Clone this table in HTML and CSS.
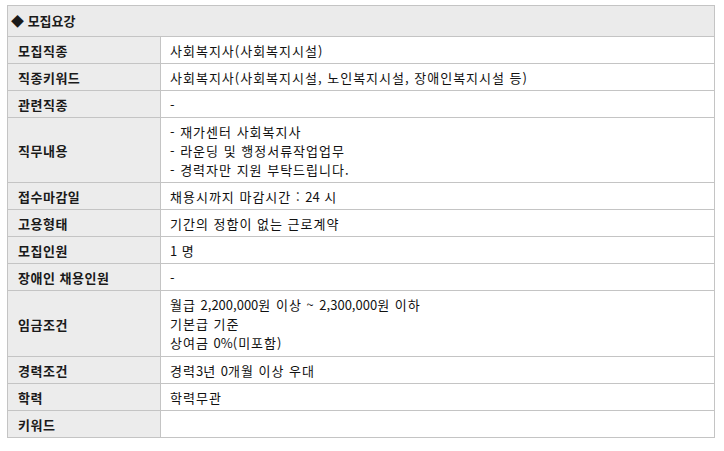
FILE: index.html
```html
<!DOCTYPE html>
<html lang="ko">
<head>
    <meta charset="UTF-8">
    <meta name="viewport" content="width=device-width, initial-scale=1.0">
    <title>모집요강</title>
    <link rel="stylesheet" href="styles.css">
</head>
<body>
    <table class="recruit-table">
        <tr>
            <th class="table-title" colspan="2">◆ 모집요강</th>
        </tr>
        <tr>
            <th>모집직종</th>
            <td>사회복지사(사회복지시설)</td>
        </tr>
        <tr>
            <th>직종키워드</th>
            <td>사회복지사(사회복지시설, 노인복지시설, 장애인복지시설 등)</td>
        </tr>
        <tr>
            <th>관련직종</th>
            <td>-</td>
        </tr>
        <tr>
            <th>직무내용</th>
            <td>- 재가센터 사회복지사<br>- 라운딩 및 행정서류작업업무<br>- 경력자만 지원 부탁드립니다.</td>
        </tr>
        <tr>
            <th>접수마감일</th>
            <td>채용시까지 마감시간 : <span class="num">24</span> 시</td>
        </tr>
        <tr>
            <th>고용형태</th>
            <td>기간의 정함이 없는 근로계약</td>
        </tr>
        <tr>
            <th>모집인원</th>
            <td><span class="num">1</span> 명</td>
        </tr>
        <tr>
            <th>장애인 채용인원</th>
            <td>-</td>
        </tr>
        <tr class="tall">
            <th>임금조건</th>
            <td>월급 <span class="num">2,200,000</span>원 이상 ~ <span class="num">2,300,000</span>원 이하<br>기본급 기준<br>상여금 <span class="num">0%</span>(미포함)</td>
        </tr>
        <tr>
            <th>경력조건</th>
            <td>경력<span class="num">3</span>년 <span class="num">0</span>개월 이상 우대</td>
        </tr>
        <tr>
            <th>학력</th>
            <td>학력무관</td>
        </tr>
        <tr>
            <th>키워드</th>
            <td></td>
        </tr>
    </table>
</body>
</html>
```

FILE: styles.css
```css
body {
    margin: 0;
    padding: 5px 0 0 7px;
    background: #fff;
    font-family: "Noto Sans CJK KR", "Noto Sans", sans-serif;
    font-size: 13px;
    color: #111;
}
.recruit-table {
    width: 708px;
    border-collapse: collapse;
    border: 1px solid #c4c4c4;
}
.recruit-table th,
.recruit-table td {
    border: 1px solid #c4c4c4;
    padding: 4px 10px 3px 10px;
    line-height: 19px;
    text-align: left;
    vertical-align: middle;
}
.recruit-table th {
    width: 132px;
    background-color: #ececec;
    font-weight: bold;
    color: #1a1a1a;
    letter-spacing: 0.5px;
}
.recruit-table td {
    padding-left: 9px;
    background: #fff;
    height: 19px;
    letter-spacing: 1px;
}
.recruit-table .num {
    letter-spacing: 0;
}
.recruit-table .tall td {
    padding-bottom: 4px;
}
.recruit-table .table-title {
    width: auto;
    padding: 5px 4px 6px 3px;
    background-color: #ebebeb;
    letter-spacing: 0;
}
```
